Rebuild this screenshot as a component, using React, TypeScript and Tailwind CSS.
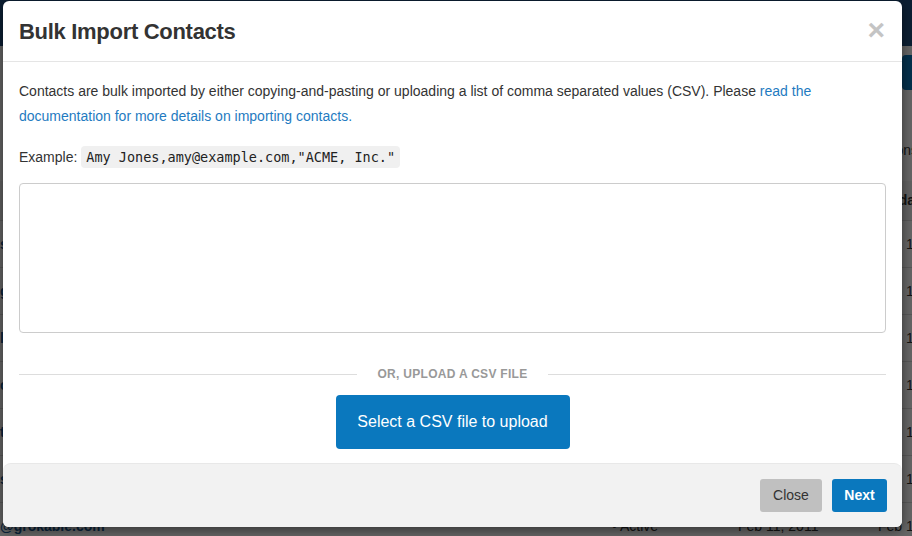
import React from 'react';

const rows = [
  { email: 'sales@grokable.com', status: 'Active', created: 'Feb 11, 2011', updated: 'Feb 11, 2011' },
  { email: 'greg@grokable.com', status: 'Active', created: 'Feb 11, 2011', updated: 'Feb 11, 2011' },
  { email: 'lisa@grokable.com', status: 'Active', created: 'Feb 11, 2011', updated: 'Feb 11, 2011' },
  { email: 'carl@grokable.com', status: 'Active', created: 'Feb 11, 2011', updated: 'Feb 11, 2011' },
  { email: 'tom1@grokable.com', status: 'Active', created: 'Feb 11, 2011', updated: 'Feb 11, 2011' },
  { email: 'sam@grokable.com', status: 'Active', created: 'Feb 11, 2011', updated: 'Feb 11, 2011' },
  { email: '@grokable.com', status: 'Active', created: 'Feb 11, 2011', updated: 'Feb 11, 2011' },
];

function BackgroundPage() {
  return (
    <div className="w-[912px] h-[536px] overflow-hidden bg-white text-[14px] text-[#333]">
      <div className="h-[46px] bg-[#1f4f80]" />
      <div className="flex justify-end pt-[9px]">
        <div className="h-[35px] w-[90px] mr-[-80px] rounded bg-[#0a78be]" />
      </div>
      <div className="flex justify-end pt-[50px]">
        <span className="mr-[-6px]">Options</span>
      </div>
      <div className="mt-[20px] h-[40px] bg-[#f5f5f5] border-b border-[#ddd] flex items-center font-bold">
        <span className="ml-[880px] shrink-0">Updated</span>
      </div>
      {rows.map((r, i) => (
        <div key={i} className="h-[47px] border-b border-[#ddd] flex items-center whitespace-nowrap">
          <span className="w-[612px] shrink-0 font-bold text-[#1a5a96]">{r.email}</span>
          <span className="w-[126px] shrink-0">• {r.status}</span>
          <span className="w-[140px] shrink-0">{r.created}</span>
          <span className="shrink-0">{r.updated}</span>
        </div>
      ))}
    </div>
  );
}

export default function App() {
  return (
    <div className="relative w-[912px] h-[536px] overflow-hidden" style={{ fontFamily: '"Liberation Sans", Arial, sans-serif' }}>
      <BackgroundPage />
      <div className="absolute inset-0 bg-black/60" />

      <div className="absolute left-[3px] top-[1px] w-[899px] h-[526px] flex flex-col bg-white rounded-md shadow-[0_3px_12px_rgba(0,0,0,0.5)]">
        {/* header */}
        <div className="h-[61px] flex items-center justify-between pl-4 pr-[17px] border-b border-[#e5e5e5]">
          <h2 className="text-[22px] font-bold text-[#333] tracking-[-0.3px]">Bulk Import Contacts</h2>
          <button className="text-[#c4c4c4] text-[30px] font-bold leading-none mt-[-2px]">×</button>
        </div>

        {/* body */}
        <div className="flex-1 px-4 pt-[17px] text-[14px] text-[#333]">
          <p className="leading-[25px]">
            Contacts are bulk imported by either copying-and-pasting or uploading a list of comma separated values (CSV). Please{' '}
            <a className="text-[#1f7bc1]" href="#">read the documentation for more details on importing contacts.</a>
          </p>
          <p className="leading-[25px] mt-4">
            Example:{' '}
            <code
              className="bg-[#f0f0f0] px-[5px] py-[3px] rounded-sm text-[13.5px] text-[#222]"
              style={{ fontFamily: '"DejaVu Sans Mono", "Liberation Mono", monospace' }}
            >
              Amy Jones,amy@example.com,"ACME, Inc."
            </code>
          </p>
          <textarea className="mt-[13px] block w-full h-[150px] border border-[#ccc] rounded resize-none outline-none" />

          <div className="mt-[32px] flex items-center gap-5">
            <div className="flex-1 h-px bg-[#ddd]" />
            <span className="text-[12px] font-bold text-[#999] tracking-[0.3px]">OR, UPLOAD A CSV FILE</span>
            <div className="flex-1 h-px bg-[#ddd]" />
          </div>

          <div className="flex justify-center mt-[12px]">
            <button className="w-[234px] h-[54px] rounded bg-[#0a78be] text-white text-[16px]">
              Select a CSV file to upload
            </button>
          </div>
        </div>

        {/* footer */}
        <div className="h-[64px] flex items-center justify-end gap-[10px] pr-[15px] bg-[#f2f2f2] border-t border-[#e8e8e8] rounded-t-lg rounded-b-md">
          <button className="w-[62px] h-[33px] rounded-[3px] bg-[#c0c0c0] text-[#333] text-[14px]">Close</button>
          <button className="w-[55px] h-[33px] rounded-[3px] bg-[#0a78be] text-white text-[14px] font-bold">Next</button>
        </div>
      </div>
    </div>
  );
}
